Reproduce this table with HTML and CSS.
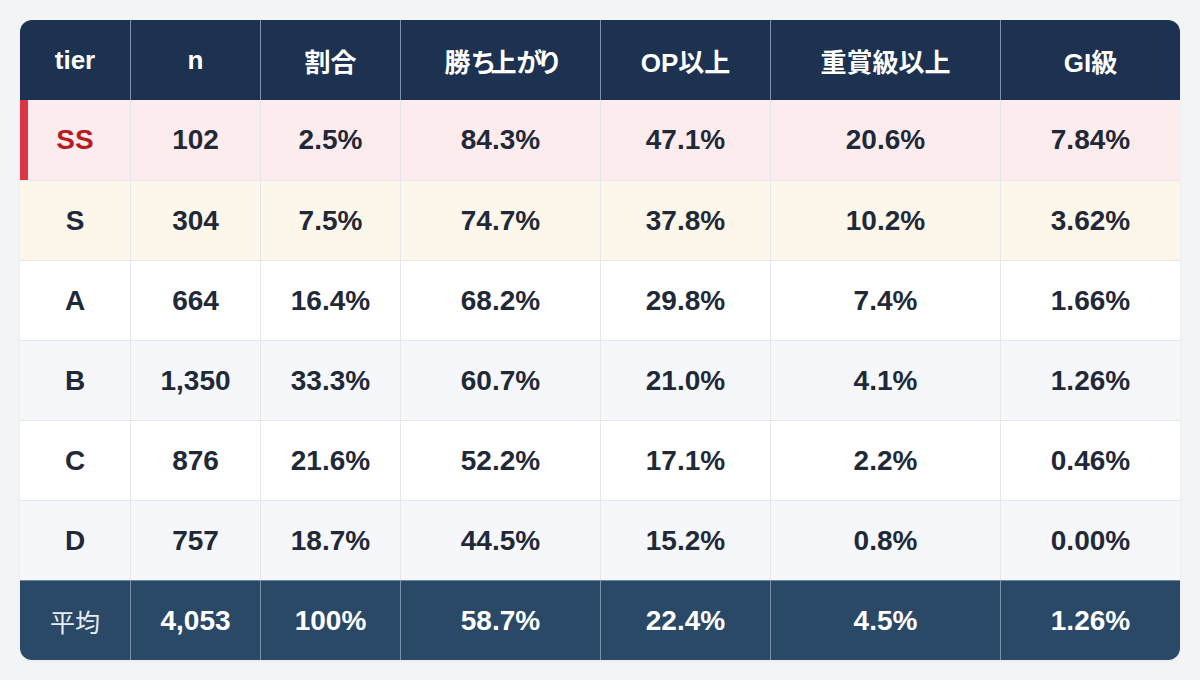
FILE: index.html
```html
<!DOCTYPE html>
<html lang="ja">
<head>
<meta charset="utf-8">
<link rel="stylesheet" href="styles.css">
</head>
<body>
<div class="wrap">
<table class="tbl">
  <colgroup>
    <col class="c1"><col class="c2"><col class="c3"><col class="c4"><col class="c5"><col class="c6"><col class="c7">
  </colgroup>
  <thead>
    <tr><th>tier</th><th>n</th><th>割合</th><th>勝<span class="kana">ち</span>上<span class="kana">がり</span></th><th>OP以上</th><th>重賞級以上</th><th>GI級</th></tr>
  </thead>
  <tbody>
    <tr class="ss"><td class="tier">SS</td><td>102</td><td>2.5%</td><td>84.3%</td><td>47.1%</td><td>20.6%</td><td>7.84%</td></tr>
    <tr class="s"><td class="tier">S</td><td>304</td><td>7.5%</td><td>74.7%</td><td>37.8%</td><td>10.2%</td><td>3.62%</td></tr>
    <tr><td class="tier">A</td><td>664</td><td>16.4%</td><td>68.2%</td><td>29.8%</td><td>7.4%</td><td>1.66%</td></tr>
    <tr class="alt"><td class="tier">B</td><td>1,350</td><td>33.3%</td><td>60.7%</td><td>21.0%</td><td>4.1%</td><td>1.26%</td></tr>
    <tr><td class="tier">C</td><td>876</td><td>21.6%</td><td>52.2%</td><td>17.1%</td><td>2.2%</td><td>0.46%</td></tr>
    <tr class="alt"><td class="tier">D</td><td>757</td><td>18.7%</td><td>44.5%</td><td>15.2%</td><td>0.8%</td><td>0.00%</td></tr>
  </tbody>
  <tfoot>
    <tr><td class="avg">平均</td><td>4,053</td><td>100%</td><td>58.7%</td><td>22.4%</td><td>4.5%</td><td>1.26%</td></tr>
  </tfoot>
</table>
</div>
</body>
</html>
```
FILE: styles.css
```css
html, body {
  margin: 0;
  padding: 0;
  background: #f3f4f6;
}
body {
  font-family: "Liberation Sans", "Noto Sans CJK JP", sans-serif;
  color: #1f2937;
}
.wrap {
  padding: 20px;
}
.tbl {
  width: 1160px;
  border-collapse: separate;
  border-spacing: 0;
  border-radius: 12px;
  overflow: hidden;
  table-layout: fixed;
  background: #ffffff;
  box-shadow: 0 1px 3px rgba(15, 23, 42, 0.06);
}
.c1 { width: 110px; }
.c2 { width: 130px; }
.c3 { width: 140px; }
.c4 { width: 200px; }
.c5 { width: 170px; }
.c6 { width: 230px; }
.c7 { width: 180px; }
.tbl th, .tbl td {
  height: 80px;
  padding: 0;
  box-sizing: border-box;
  text-align: center;
  vertical-align: middle;
  font-size: 28px;
  font-weight: 700;
}
.tbl th + th, .tbl td + td {
  border-left: 1px solid #e5e7eb;
}
.tbl thead th {
  background: #1c3250;
  color: #ffffff;
  font-size: 26px;
}
.tbl thead th .kana {
  letter-spacing: -6px;
}
.tbl thead th + th {
  border-left-color: #7d91aa;
}
.tbl tbody td {
  border-top: 1px solid #e5e7eb;
}
.tbl tbody tr:first-child td {
  border-top: 0;
}
.tbl tr.ss td {
  background: #fdecee;
}
.tbl tr.ss td.tier {
  color: #b91c1c;
  box-shadow: inset 8px 0 0 #dc3545;
}
.tbl tr.s td {
  background: #fdf6ea;
}
.tbl tr.alt td {
  background: #f5f7fa;
}
.tbl tfoot td {
  background: #2a4966;
  color: #ffffff;
  border-top: 1px solid #6f87a1;
}
.tbl tfoot td + td {
  border-left-color: #7d91aa;
}
.tbl tfoot td.avg {
  font-weight: 400;
  font-size: 25px;
  color: #e8edf3;
}
```
